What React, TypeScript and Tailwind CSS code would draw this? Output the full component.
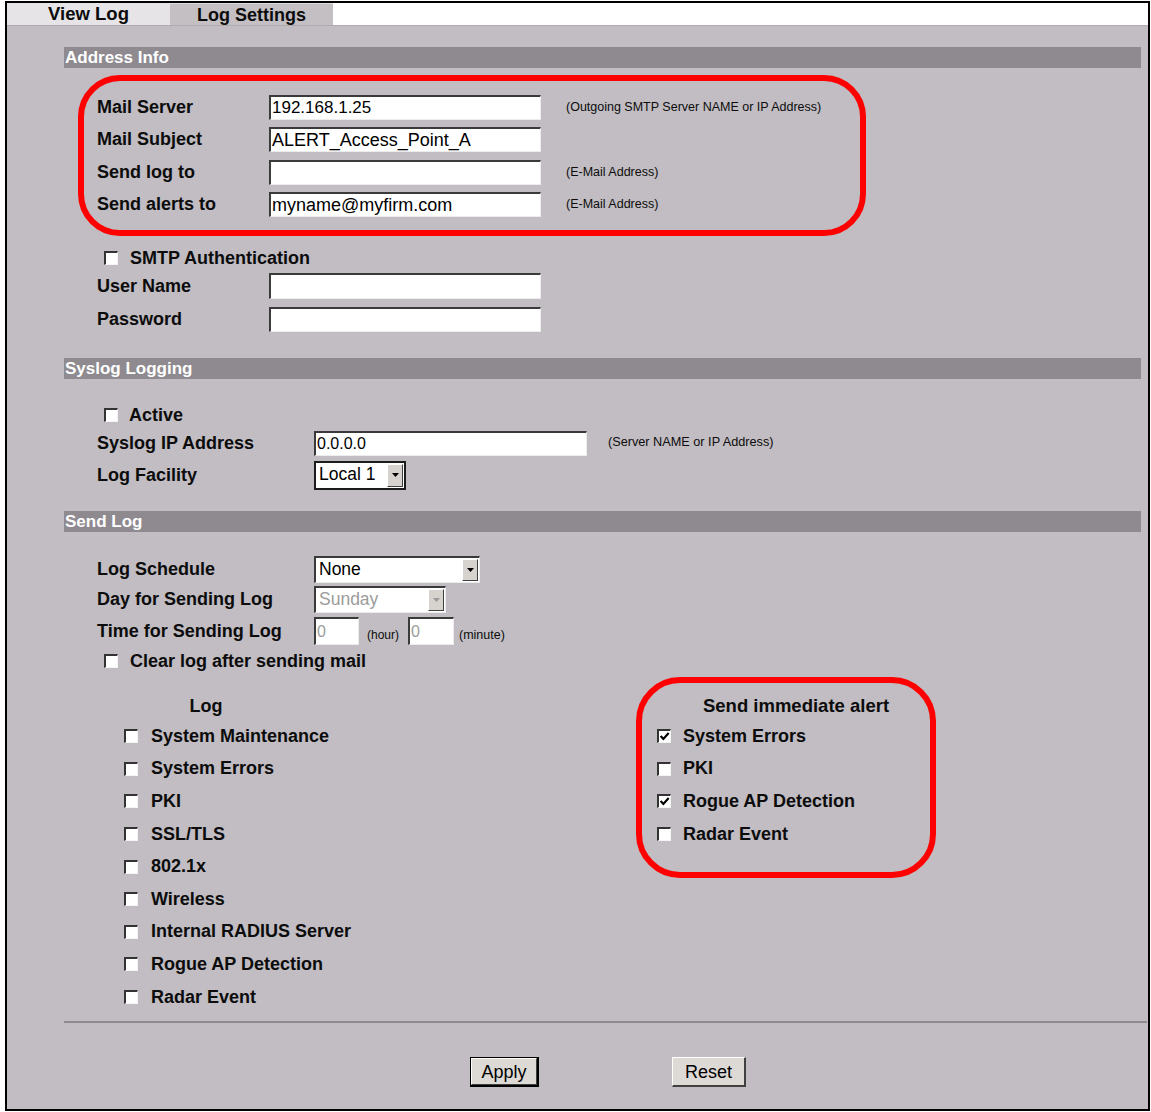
import React from "react";

function CheckBox({ checked }: { checked?: boolean }) {
  return (
    <span className="relative inline-block w-[14px] h-[14px] shrink-0 bg-white border-t-2 border-l-2 border-b border-r border-t-[#333333] border-l-[#333333] border-b-[#f4f4f4] border-r-[#f4f4f4]">
      {checked && (
        <svg viewBox="0 0 10 10" className="absolute left-0 top-0 w-[11px] h-[11px]">
          <path d="M1.5 4.5 L4 7.2 L8.8 1.8" fill="none" stroke="#000" strokeWidth="2" />
        </svg>
      )}
    </span>
  );
}

function TextInput({ value, className, muted }: { value?: string; className: string; muted?: boolean }) {
  return (
    <div
      className={`flex items-center h-[25px] bg-white border-t-2 border-l-2 border-b border-r border-t-[#3a3a3a] border-l-[#3a3a3a] border-b-[#ececec] border-r-[#ececec] pl-[1px] leading-none whitespace-nowrap overflow-hidden font-normal ${muted ? "text-[#9c9c9c]" : "text-black"} ${className}`}
    >
      {value}
    </div>
  );
}

function Arrow({ disabled }: { disabled?: boolean }) {
  return (
    <span className="flex items-center justify-center w-[16px] h-full bg-[#d6d3ce] border-t border-l border-b border-r border-t-white border-l-white border-b-[#404040] border-r-[#404040]">
      <svg viewBox="0 0 7 4" className="w-[7px] h-[4px]">
        <path d="M0 0 L7 0 L3.5 4 Z" fill={disabled ? "#9a9a9a" : "#000"} />
      </svg>
    </span>
  );
}

function Select({ value, className, disabled, focused }: { value: string; className: string; disabled?: boolean; focused?: boolean }) {
  return (
    <div
      className={`flex items-stretch bg-white font-normal ${focused ? "border-2 border-[#1c1c1c] h-[29px]" : "border-t-2 border-l-2 border-b border-r border-t-[#3a3a3a] border-l-[#3a3a3a] border-b-[#ececec] border-r-[#ececec] h-[27px]"} ${className}`}
    >
      <span className={`flex-1 flex items-center pl-[3px] text-[17.5px] leading-none ${disabled ? "text-[#9c9c9c]" : "text-black"}`}>{value}</span>
      <span className="p-[1px] flex">
        <Arrow disabled={disabled} />
      </span>
    </div>
  );
}

function SectionBar({ title }: { title: string }) {
  return (
    <div className="h-[21px] bg-[#8e8a8f] flex items-center pl-[1px] text-white font-bold text-[17px] leading-none">
      {title}
    </div>
  );
}

const logItems = [
  "System Maintenance",
  "System Errors",
  "PKI",
  "SSL/TLS",
  "802.1x",
  "Wireless",
  "Internal RADIUS Server",
  "Rogue AP Detection",
  "Radar Event",
];

const alertItems = [
  { label: "System Errors", checked: true },
  { label: "PKI", checked: false },
  { label: "Rogue AP Detection", checked: true },
  { label: "Radar Event", checked: false },
];

export default function App() {
  return (
    <div className="w-[1151px] h-[1112px] bg-white overflow-hidden font-['Liberation_Sans',Arial,sans-serif] text-[#0c0c0c]">
      <div className="relative ml-[5px] mt-[1px] w-[1145px] h-[1110px] border-2 border-black bg-[#c1bdc2]">
        {/* tabs */}
        <div className="flex h-[23px] bg-white border-b border-b-[#aeaaae]">
          <div className="w-[163px] flex items-center justify-center bg-[#e6e4e7] font-bold text-[18.5px] leading-none">View Log</div>
          <div className="w-[163px] flex items-center justify-center bg-[#c3bfc3] border-t border-t-[#dedbde] font-bold text-[18px] leading-none">Log Settings</div>
          <div className="flex-1" />
        </div>

        <div className="pl-[57px] pr-[7px]">
          {/* Address Info */}
          <div className="mt-[21px]">
            <SectionBar title="Address Info" />
          </div>
          <div className="mt-[23px] pl-[33px] text-[18px] font-bold">
            <div className="flex items-center h-[32px]">
              <div className="w-[172px]">Mail Server</div>
              <TextInput value="192.168.1.25" className="w-[272px] text-[17px]" />
              <span className="ml-[25px] text-[12.5px] font-normal">(Outgoing SMTP Server NAME or IP Address)</span>
            </div>
            <div className="flex items-center h-[33px]">
              <div className="w-[172px]">Mail Subject</div>
              <TextInput value="ALERT_Access_Point_A" className="w-[272px] text-[18px]" />
            </div>
            <div className="flex items-center h-[32px]">
              <div className="w-[172px]">Send log to</div>
              <TextInput value="" className="w-[272px]" />
              <span className="ml-[25px] text-[12.5px] font-normal">(E-Mail Address)</span>
            </div>
            <div className="flex items-center h-[33px]">
              <div className="w-[172px]">Send alerts to</div>
              <TextInput value="myname@myfirm.com" className="w-[272px] text-[18px]" />
              <span className="ml-[25px] text-[12.5px] font-normal">(E-Mail Address)</span>
            </div>
            <div className="mt-[23px] flex items-center h-[28px] pl-[7px] gap-[12px]">
              <CheckBox />
              <span>SMTP Authentication</span>
            </div>
            <div className="flex items-center h-[28px]">
              <div className="w-[172px]">User Name</div>
              <TextInput value="" className="w-[272px] h-[26px]" />
            </div>
            <div className="flex items-center h-[38px]">
              <div className="w-[172px]">Password</div>
              <TextInput value="" className="w-[272px]" />
            </div>
          </div>

          {/* Syslog */}
          <div className="mt-[20px]">
            <SectionBar title="Syslog Logging" />
          </div>
          <div className="mt-[22px] pl-[33px] text-[18px] font-bold">
            <div className="flex items-center h-[28px] pl-[7px] gap-[11px]">
              <CheckBox />
              <span>Active</span>
            </div>
            <div className="flex items-center h-[28px]">
              <div className="w-[217px]">Syslog IP Address</div>
              <TextInput value="0.0.0.0" className="w-[273px] text-[16px]" />
              <span className="ml-[21px] text-[12.7px] font-normal">(Server NAME or IP Address)</span>
            </div>
            <div className="flex items-center h-[36px]">
              <div className="w-[217px]">Log Facility</div>
              <Select value="Local 1" className="w-[92px]" focused />
            </div>
          </div>

          {/* Send Log */}
          <div className="mt-[18px]">
            <SectionBar title="Send Log" />
          </div>
          <div className="mt-[22px] pl-[33px] text-[18px] font-bold">
            <div className="flex items-center h-[30px]">
              <div className="w-[217px]">Log Schedule</div>
              <Select value="None" className="w-[166px]" />
            </div>
            <div className="flex items-center h-[30px]">
              <div className="w-[217px]">Day for Sending Log</div>
              <Select value="Sunday" className="w-[132px]" disabled />
            </div>
            <div className="flex items-center h-[34px]">
              <div className="w-[217px]">Time for Sending Log</div>
              <TextInput value="0" muted className="w-[45px] h-[28px] text-[16px]" />
              <span className="ml-[8px] mt-[8px] text-[12px] font-normal">(hour)</span>
              <TextInput value="0" muted className="ml-[9px] w-[46px] h-[28px] text-[16px]" />
              <span className="ml-[5px] mt-[8px] text-[12.5px] font-normal">(minute)</span>
            </div>
            <div className="flex items-center h-[26px] pl-[7px] gap-[12px]">
              <CheckBox />
              <span>Clear log after sending mail</span>
            </div>
          </div>

          {/* Log / alert columns */}
          <div className="mt-[18px] flex text-[18px] font-bold">
            <div className="ml-[60px] w-[164px]">
              <div className="h-[28px] flex items-center justify-center">Log</div>
              {logItems.map((item) => (
                <div key={item} className="h-[32.6px] flex items-center gap-[13px] whitespace-nowrap">
                  <CheckBox />
                  <span>{item}</span>
                </div>
              ))}
            </div>
            <div className="ml-[369px] w-[278px]">
              <div className="h-[28px] flex items-center justify-center whitespace-nowrap text-[18.5px]">Send immediate alert</div>
              {alertItems.map((item) => (
                <div key={item.label} className="h-[32.6px] flex items-center gap-[12px] whitespace-nowrap">
                  <CheckBox checked={item.checked} />
                  <span>{item.label}</span>
                </div>
              ))}
            </div>
          </div>

          <div className="mt-[8px] -mr-[6px] h-[2px] bg-[#8e8a8e]" />

          {/* buttons */}
          <div className="mt-[34px] flex">
            <div className="ml-[406px] w-[69px] h-[30px] border border-b-2 border-r-2 border-black">
              <div className="w-full h-full flex items-center justify-center bg-[#ddd9d4] border-t border-l border-b border-r border-t-white border-l-white border-b-[#404040] border-r-[#404040] text-[18px] leading-none text-black">
                Apply
              </div>
            </div>
            <div className="ml-[133px] w-[74px] h-[30px] flex items-center justify-center bg-[#ddd9d4] border-t border-l border-b-2 border-r-2 border-t-white border-l-white border-b-[#404040] border-r-[#404040] text-[18px] leading-none text-black">
              Reset
            </div>
          </div>
        </div>

        {/* red annotation rings */}
        <div className="absolute left-[71px] top-[72px] w-[788px] h-[161px] border-[6px] border-[#ff0000] rounded-[42px] pointer-events-none" />
        <div className="absolute left-[629px] top-[674px] w-[300px] h-[201px] border-[6px] border-[#ff0000] rounded-[44px] pointer-events-none" />
      </div>
    </div>
  );
}
